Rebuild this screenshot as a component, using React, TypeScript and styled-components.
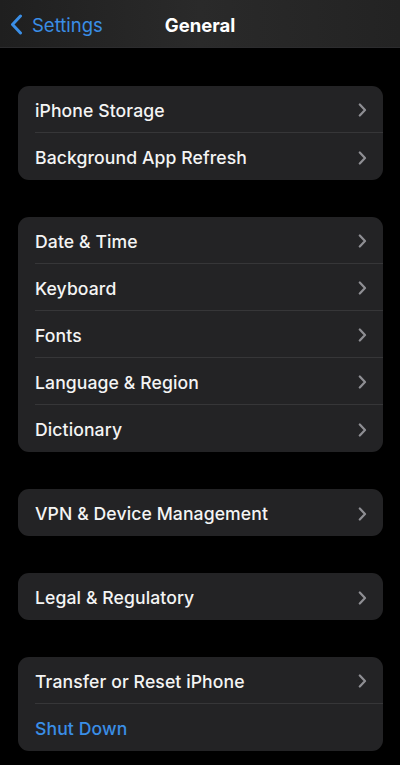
import React from 'react';
import styled, { createGlobalStyle } from 'styled-components';

const GlobalStyle = createGlobalStyle`
  html, body {
    margin: 0;
    padding: 0;
    background: #000;
  }
  body {
    font-family: Inter, "Noto Sans", "Liberation Sans", sans-serif;
    -webkit-font-smoothing: antialiased;
  }
`;

const Screen = styled.div`
  width: 400px;
  min-height: 765px;
  background: #000;
  display: flex;
  flex-direction: column;
`;

const NavBar = styled.div`
  height: 47px;
  background: linear-gradient(90deg, #1f1f1f 0%, #2a2a2a 50%, #232323 100%);
  display: grid;
  grid-template-columns: 1fr auto 1fr;
  align-items: center;
  border-bottom: 1px solid #2c2c2e;
`;

const BackButton = styled.button`
  justify-self: start;
  display: flex;
  align-items: center;
  gap: 9px;
  background: none;
  border: none;
  padding: 2px 0 0 10px;
  color: #3a8ee6;
  font-family: inherit;
  font-size: 18.5px;
  font-weight: 400;
  cursor: pointer;
`;

const NavTitle = styled.h1`
  margin: 0;
  padding-top: 2px;
  color: #fff;
  font-size: 18.5px;
  font-weight: 700;
`;

const Content = styled.div`
  display: flex;
  flex-direction: column;
  gap: 37px;
  padding: 38px 17px 14px 18px;
`;

const Group = styled.div`
  background: #232325;
  border-radius: 11px;
  overflow: hidden;
`;

const Row = styled.div<{ $last?: boolean }>`
  height: 47px;
  margin-left: 17px;
  padding: 2px 16px 0 0;
  display: flex;
  align-items: center;
  justify-content: space-between;
  border-bottom: ${p => (p.$last ? 'none' : '1px solid #363638')};
  box-sizing: border-box;
`;

const Label = styled.span<{ $action?: boolean }>`
  color: ${p => (p.$action ? '#3a8ee6' : '#f4f4f4')};
  font-size: 17.6px;
  font-weight: 500;
  letter-spacing: 0.1px;
`;

const Chevron = () => (
  <svg width="9" height="14" viewBox="0 0 9 14">
    <path d="M1.8 1.5 L7 7 L1.8 12.5" fill="none" stroke="#8e8e93" strokeWidth="2.2" strokeLinecap="round" strokeLinejoin="round" />
  </svg>
);

type Item = { label: string; action?: boolean };

const groups: Item[][] = [
  [{ label: 'iPhone Storage' }, { label: 'Background App Refresh' }],
  [
    { label: 'Date & Time' },
    { label: 'Keyboard' },
    { label: 'Fonts' },
    { label: 'Language & Region' },
    { label: 'Dictionary' },
  ],
  [{ label: 'VPN & Device Management' }],
  [{ label: 'Legal & Regulatory' }],
  [{ label: 'Transfer or Reset iPhone' }, { label: 'Shut Down', action: true }],
];

const App: React.FC = () => (
  <Screen>
    <GlobalStyle />
    <NavBar>
      <BackButton>
        <svg width="13" height="21" viewBox="0 0 13 21">
          <path d="M10.5 2 L2.5 10.5 L10.5 19" fill="none" stroke="#3a8ee6" strokeWidth="3" strokeLinecap="round" strokeLinejoin="round" />
        </svg>
        Settings
      </BackButton>
      <NavTitle>General</NavTitle>
      <div />
    </NavBar>
    <Content>
      {groups.map((items, gi) => (
        <Group key={gi}>
          {items.map((item, i) => (
            <Row key={item.label} $last={i === items.length - 1}>
              <Label $action={item.action}>{item.label}</Label>
              {!item.action && <Chevron />}
            </Row>
          ))}
        </Group>
      ))}
    </Content>
  </Screen>
);

export default App;
